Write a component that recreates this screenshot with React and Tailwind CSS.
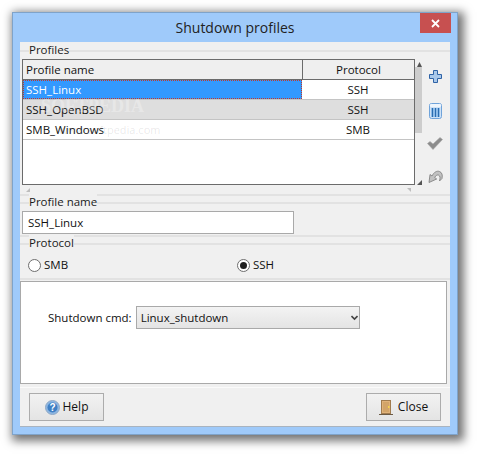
import React from 'react';

const font = { fontFamily: '"Open Sans", "Noto Sans", sans-serif' };

function GroupLabel({ children }) {
    return (
        <div className="relative h-[15px]">
            <div className="absolute left-0 right-0 top-[6px] h-[2px] bg-[#e2e2e2]" />
            <span className="absolute left-[9px] top-[-2px] bg-[#f0f0f0] text-[11.5px] leading-[16px] text-[#1a1a1a]">{children}</span>
        </div>
    );
}

function Row({ name, proto, selected, shaded }) {
    return (
        <div className={`flex h-[20px] border-b border-[#c4c4c4] text-[11.5px] leading-[19px] ${shaded ? 'bg-[#dedede]' : 'bg-white'}`}>
            <div className={`w-[279px] pl-[3px] ${selected ? 'bg-[#3399ff] text-white outline-1 outline-dotted outline-offset-[-1px] outline-[#c0392b]' : 'text-[#111]'}`}>{name}</div>
            <div className="flex-1 text-center text-[#111]">{proto}</div>
        </div>
    );
}

function PlusIcon() {
    return (
        <svg width="13" height="13" viewBox="0 0 13 13">
            <path d="M4.500 0.500h4v4h4v4h-4v4h-4v-4h-4v-4h4z" fill="#a9c8ea" stroke="#2f63a6" strokeWidth="1" />
        </svg>
    );
}

function TrashIcon() {
    return (
        <svg width="13" height="16" viewBox="0 0 13 16">
            <rect x="0.500" y="0.500" width="12" height="15" rx="2" fill="#cfe2f6" stroke="#6fa3da" />
            <rect x="1" y="1" width="11" height="3" rx="1" fill="#eef5fc" />
            <rect x="2" y="5" width="9" height="9" fill="#8dbbe8" />
            <path d="M3.500 5v9M6.500 5v9M9.500 5v9" stroke="#2a6cb0" strokeWidth="1" />
        </svg>
    );
}

function CheckIcon() {
    return (
        <svg width="16" height="13" viewBox="0 0 16 13">
            <path d="M0.500 6.500l2.500-2 3 2.500 7-6.500 2.500 2-9.500 10z" fill="#8c8c8c" stroke="#a5a5a5" strokeWidth="0.6" />
        </svg>
    );
}

function UndoIcon() {
    return (
        <svg width="15" height="13" viewBox="0 0 15 13">
            <path d="M1 12.500l1-8 2 1.500C6 2 9 0.500 11.500 1.500 14 2.500 14.800 5 14 8.500l-2.500 2.500c.8-3 .8-5-.8-5.800-1.500-.6-3 .3-4 2.300l2 1.500z" fill="#c2c2c2" stroke="#7a7a7a" strokeWidth="0.8" />
        </svg>
    );
}

function HelpIcon() {
    return (
        <svg width="15" height="15" viewBox="0 0 15 15">
            <circle cx="7.500" cy="7.500" r="7" fill="#8db6e2" stroke="#8fa9c6" />
            <circle cx="7.500" cy="7.500" r="5" fill="#3f7fc4" />
            <text x="7.500" y="11" textAnchor="middle" fontSize="10" fontWeight="700" fill="#fff" fontFamily="Liberation Sans">?</text>
        </svg>
    );
}

function DoorIcon() {
    return (
        <svg width="15" height="15" viewBox="0 0 15 15">
            <rect x="2.500" y="0.500" width="9" height="13" fill="#e0b27a" stroke="#a07b4e" />
            <rect x="4" y="2" width="6" height="10" fill="#d3a468" />
            <rect x="9" y="6" width="1.500" height="2" fill="#f5d64a" />
            <path d="M0 14.500h14" stroke="#6b5a45" />
        </svg>
    );
}

function Radio({ checked }) {
    return (
        <span className="flex h-[13px] w-[13px] items-center justify-center rounded-full border border-[#6e6e6e] bg-white">
            {checked && <span className="h-[7px] w-[7px] rounded-full bg-[#1f1f1f]" />}
        </span>
    );
}

export default function App() {
    return (
        <div className="h-[455px] w-[478px] overflow-hidden bg-white pl-[12px] pt-[12px]" style={font}>
            <div className="flex h-[423px] w-[446px] flex-col border border-[#7fa3c9] bg-[#9fcafa] shadow-[3px_3px_9px_3px_rgba(0,0,0,0.55)]">
                {/* Title bar */}
                <div className="relative flex h-[29px] shrink-0 items-center justify-center text-[14px] text-[#222]">
                    Shutdown profiles
                    <div className="absolute right-[6px] top-0 flex h-[20px] w-[31px] items-center justify-center bg-[#c75050]">
                        <svg width="9" height="9" viewBox="0 0 9 9">
                            <path d="M1 1l7 7M8 1l-7 7" stroke="#fff" strokeWidth="1.800" />
                        </svg>
                    </div>
                </div>

                {/* Client area */}
                <div className="mx-[7px] flex h-[385px] flex-col border-b border-[#a9b4c0] bg-[#f0f0f0] pt-[2px]">
                    <GroupLabel>Profiles</GroupLabel>

                    <div className="flex h-[135px] pl-[2px]">
                        <div className="w-[393px]">
                            <div className="relative h-[126px] border border-[#6b6b6b] bg-white">
                                <div className="flex h-[20px] border-b border-[#6b6b6b] bg-[#efefef] text-[11.5px] leading-[19px] text-[#111]">
                                    <div className="w-[280px] border-r border-[#6b6b6b] pl-[3px]">Profile name</div>
                                    <div className="flex-1 text-center">Protocol</div>
                                </div>
                                <Row name="SSH_Linux" proto="SSH" selected />
                                <Row name="SSH_OpenBSD" proto="SSH" shaded />
                                <Row name="SMB_Windows" proto="SMB" />
                                {/* site watermark over the rows */}
                                <span className="pointer-events-none absolute left-[18px] top-[33px] text-[18px] font-bold text-white/30" style={{ fontFamily: '"Liberation Serif", serif' }}>SOFTPEDIA</span>
                                <span className="pointer-events-none absolute left-[36px] top-[62px] text-[11px] text-black/10">www.softpedia.com</span>
                            </div>
                            {/* Horizontal scrollbar ends */}
                            <div className="flex items-center justify-between px-[4px] pt-[3px]">
                                <svg width="4" height="4" viewBox="0 0 4 4"><path d="M4 0v4H0z" fill="#bdbdbd" /></svg>
                                <svg width="4" height="4" viewBox="0 0 4 4"><path d="M0 0h4v4z" fill="#bdbdbd" /></svg>
                            </div>
                        </div>

                        {/* Vertical scrollbar */}
                        <div className="relative h-[126px] w-[8px]">
                            <div className="absolute left-0 top-[8px] h-[66px] w-[7px] bg-[#cdcdcd]" />
                            <svg className="absolute left-[2px] top-[3px]" width="5" height="5" viewBox="0 0 5 5"><path d="M2.500 0L5 5H0z" fill="#555" /></svg>
                            <svg className="absolute bottom-[0px] left-[2px]" width="5" height="5" viewBox="0 0 5 5"><path d="M5 0v5H0z" fill="#555" /></svg>
                        </div>

                        {/* Side tools */}
                        <div className="flex w-[24px] flex-col items-center pt-[9px]">
                            <div className="flex h-[16px] items-center"><PlusIcon /></div>
                            <div className="mt-[19px] flex h-[16px] items-center"><TrashIcon /></div>
                            <div className="mt-[18px] flex h-[13px] items-center"><CheckIcon /></div>
                            <div className="mt-[20px] flex h-[13px] items-center"><UndoIcon /></div>
                        </div>
                    </div>

                    <div className="h-[2px] bg-[#e2e2e2]" />

                    <GroupLabel>Profile name</GroupLabel>
                    <div className="pl-[2px]">
                        <input
                            readOnly
                            value="SSH_Linux"
                            className="block h-[23px] w-[272px] border border-[#a9a9a9] bg-white px-[5px] text-[11.5px] text-[#111] outline-none"
                        />
                    </div>
                    <div className="mt-[1px] h-[2px] bg-[#e2e2e2]" />

                    <GroupLabel>Protocol</GroupLabel>
                    <div className="flex h-[26px] items-center pl-[8px] text-[11.5px] text-[#111]">
                        <div className="flex w-[209px] items-center gap-[3px]"><Radio />SMB</div>
                        <div className="flex items-center gap-[3px]"><Radio checked />SSH</div>
                    </div>
                    <div className="h-[2px] bg-[#e2e2e2]" />

                    {/* Command panel */}
                    <div className="mr-[3px] mt-[1px] flex h-[103px] shrink-0 border border-[#a9a9a9] bg-white pl-[27px] pt-[24px]">
                        <div className="flex h-[23px] items-center text-[11.5px] text-[#111]">
                            <span className="mr-[4px]">Shutdown cmd:</span>
                            <div className="flex h-[23px] w-[224px] items-center justify-between border border-[#a9a9a9] bg-gradient-to-b from-[#f3f3f3] to-[#e4e4e4] pl-[4px] pr-[1px]">
                                Linux_shutdown
                                <svg width="7" height="6" viewBox="0 0 7 6">
                                    <path d="M0.500 1l3 3 3-3" fill="none" stroke="#444" strokeWidth="1.600" />
                                </svg>
                            </div>
                        </div>
                    </div>

                    {/* Footer */}
                    <div className="mt-[3px] flex flex-1 items-start justify-between border-t border-[#fafafa] px-[9px] pt-[5px]">
                        <button className="flex h-[28px] w-[75px] items-center justify-center gap-[3px] border border-[#acacac] bg-gradient-to-b from-[#f2f2f2] to-[#e4e4e4] text-[12px] text-[#111]">
                            <HelpIcon />Help
                        </button>
                        <button className="flex h-[28px] w-[75px] items-center justify-center gap-[4px] border border-[#acacac] bg-gradient-to-b from-[#f2f2f2] to-[#e4e4e4] text-[12px] text-[#111]">
                            <DoorIcon />Close
                        </button>
                    </div>
                </div>
            </div>
        </div>
    );
}
